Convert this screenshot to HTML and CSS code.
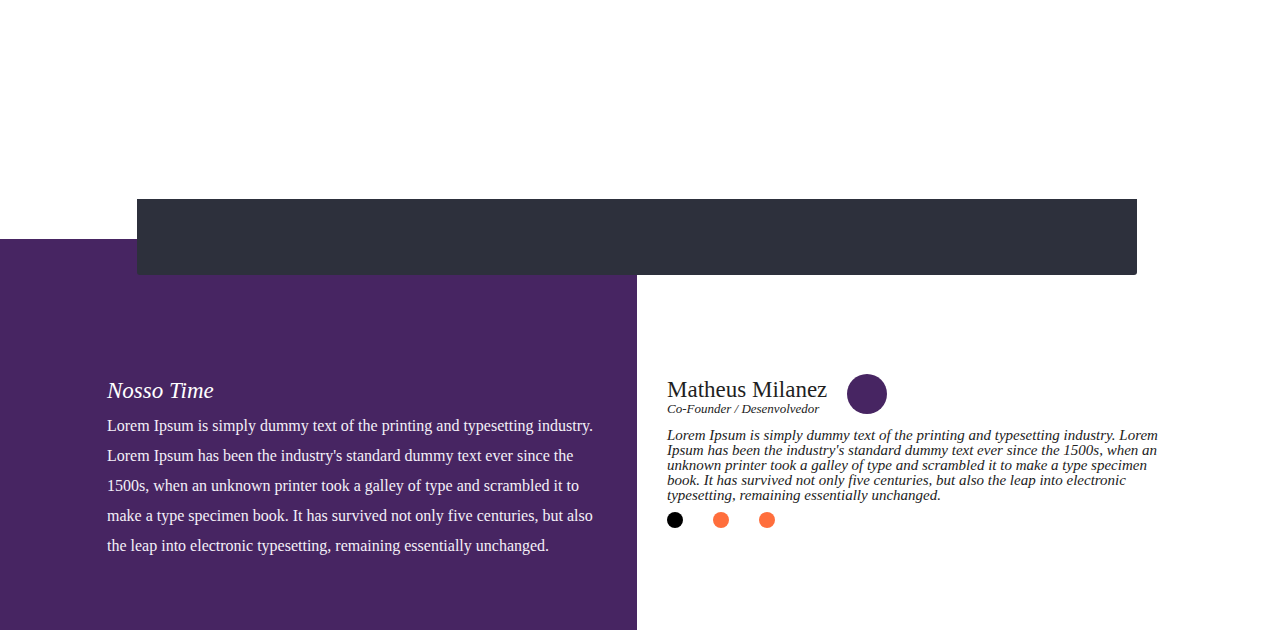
FILE: index.html
```html
<!DOCTYPE html>
<html lang="pt">
<head>
<meta charset="utf-8">
<title>Nosso Time</title>
<link rel="stylesheet" href="styles.css">
</head>
<body>
<div class="top-space"></div>
<div class="bar"></div>
<section class="team">
  <div class="team-intro">
    <h2 class="team-title">Nosso Time</h2>
    <p class="team-text">Lorem Ipsum is simply dummy text of the printing and typesetting industry. Lorem Ipsum has been the industry's standard dummy text ever since the 1500s, when an unknown printer took a galley of type and scrambled it to make a type specimen book. It has survived not only five centuries, but also the leap into electronic typesetting, remaining essentially unchanged.</p>
  </div>
  <div class="member">
    <div class="member-head">
      <div class="member-id">
        <h3 class="member-name">Matheus Milanez</h3>
        <span class="member-role">Co-Founder / Desenvolvedor</span>
      </div>
      <div class="avatar"></div>
    </div>
    <p class="member-text">Lorem Ipsum is simply dummy text of the printing and typesetting industry. Lorem Ipsum has been the industry's standard dummy text ever since the 1500s, when an unknown printer took a galley of type and scrambled it to make a type specimen book. It has survived not only five centuries, but also the leap into electronic typesetting, remaining essentially unchanged.</p>
    <div class="dots">
      <span class="dot dot-active"></span>
      <span class="dot"></span>
      <span class="dot"></span>
    </div>
  </div>
</section>
</body>
</html>
```

FILE: styles.css
```css
html, body {
  margin: 0;
  padding: 0;
  background: #ffffff;
  font-family: "Liberation Serif", "Times New Roman", serif;
  overflow: hidden;
}

.top-space {
  height: 199px;
}

.bar {
  position: relative;
  z-index: 1;
  margin-left: 137px;
  width: 1000px;
  height: 76px;
  background: #2d303c;
  border-radius: 0 0 3px 3px;
}

.team {
  display: flex;
  margin-top: -36px;
  height: 420px;
}

.team-intro {
  width: 637px;
  box-sizing: border-box;
  background: #472562;
  padding: 138px 40px 0 107px;
  color: #f4f0f8;
}

.team-title {
  margin: 0;
  padding-top: 1px;
  font-size: 23px;
  font-weight: normal;
  font-style: italic;
  line-height: 25px;
  color: #ffffff;
}

.team-text {
  margin: 8px 0 0;
  font-size: 16px;
  line-height: 30px;
}

.member {
  padding: 135px 0 0 30px;
  width: 500px;
  color: #222222;
}

.member-head {
  display: flex;
  align-items: flex-start;
  gap: 20px;
}

.member-id {
  display: flex;
  flex-direction: column;
}

.member-name {
  margin: 0;
  padding-top: 3px;
  font-size: 23px;
  font-weight: normal;
  line-height: 26px;
  color: #1f1f1f;
}

.member-role {
  margin-top: -1px;
  font-size: 13px;
  font-style: italic;
  line-height: 13px;
  color: #222222;
}

.avatar {
  width: 40px;
  height: 40px;
  border-radius: 50%;
  background: #472562;
}

.member-text {
  margin: 13px 0 0;
  font-size: 15px;
  font-style: italic;
  line-height: 15px;
  color: #222222;
}

.dots {
  display: flex;
  gap: 30px;
  margin-top: 9px;
}

.dot {
  width: 16px;
  height: 16px;
  border-radius: 50%;
  background: #ff6e3c;
}

.dot-active {
  background: #000000;
}
```
